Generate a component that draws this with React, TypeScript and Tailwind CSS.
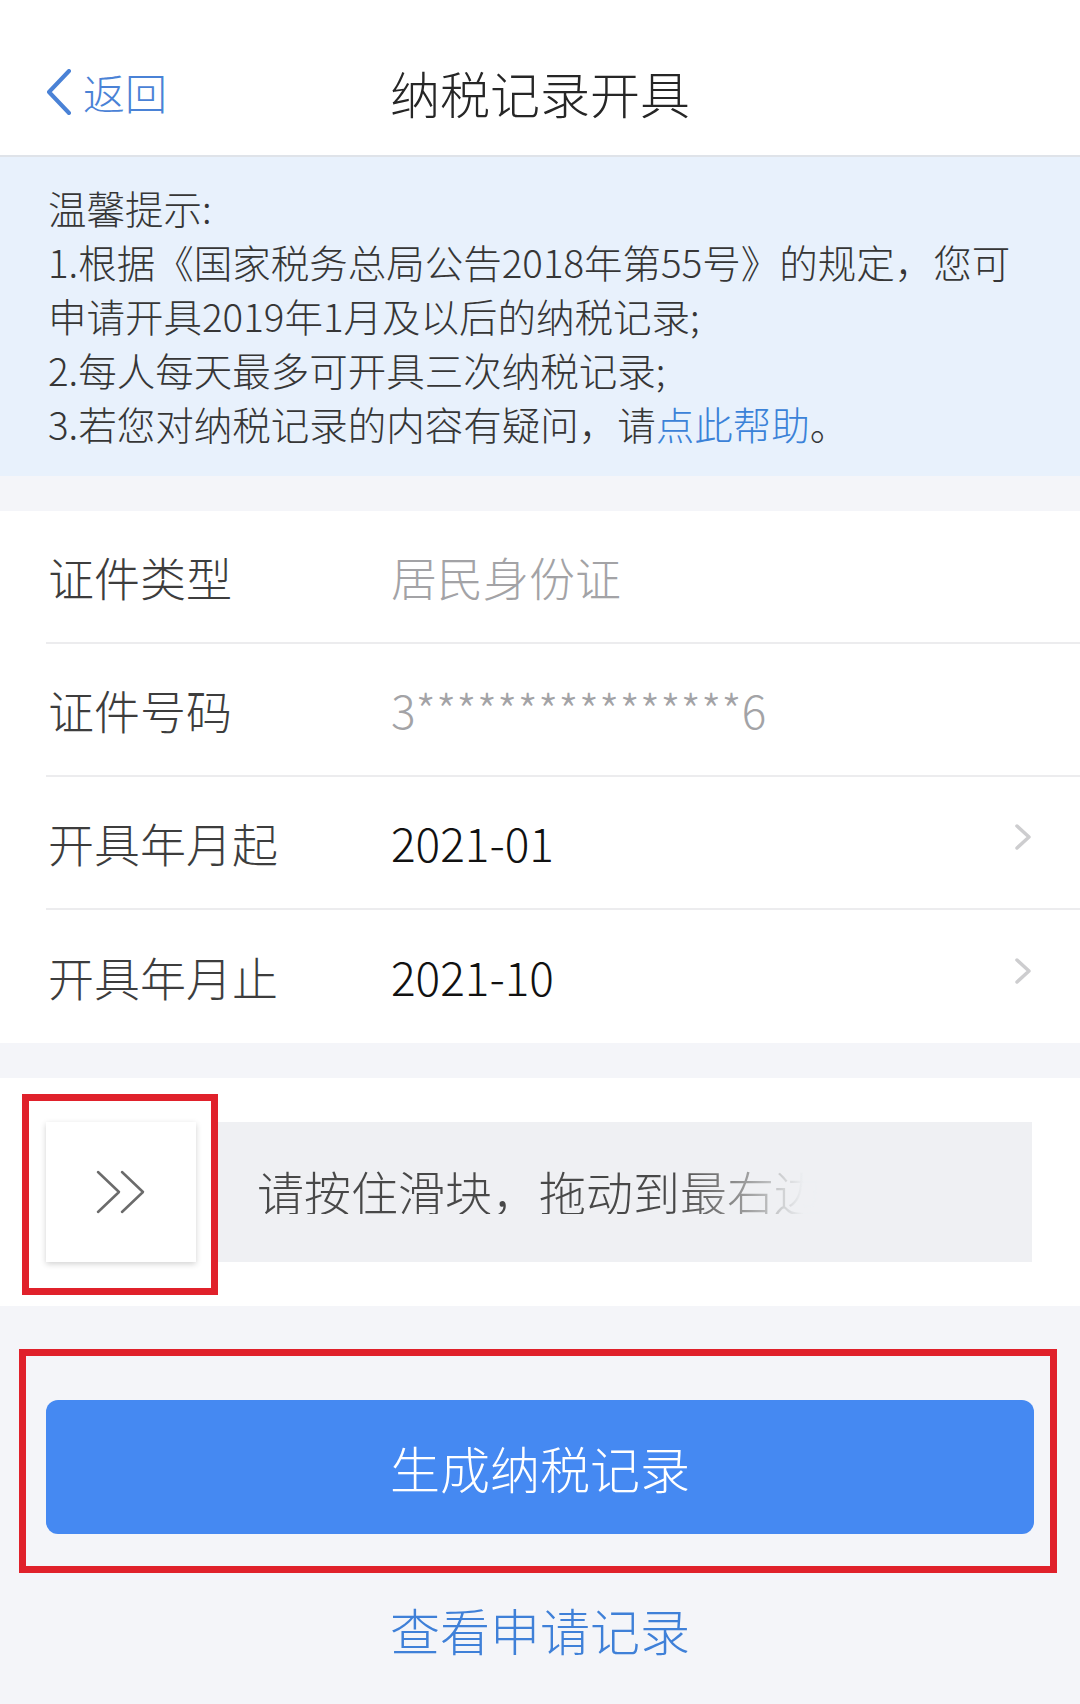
import React from 'react';

const rows = [
    { label: '证件类型', value: '居民身份证', muted: true, arrow: false },
    { label: '证件号码', value: '3****************6', muted: true, arrow: false },
    { label: '开具年月起', value: '2021-01', muted: false, arrow: true },
    { label: '开具年月止', value: '2021-10', muted: false, arrow: true },
];

const Chevron: React.FC = () => (
    <svg width="18" height="28" viewBox="0 0 18 28" fill="none">
        <polyline points="3,2 15,13 3,24" stroke="#cdcdcf" strokeWidth={3.5} strokeLinecap="round" strokeLinejoin="round" />
    </svg>
);

const App: React.FC = () => {
    return (
        <div className="relative w-[1080px] h-[1704px] bg-[#f4f5f9] font-light font-['Noto_Sans_CJK_SC','PingFang_SC',sans-serif] overflow-hidden">
            {/* nav bar */}
            <div className="h-[157px] bg-white border-b-2 border-[#dfe3e9] pt-[62px]">
                <div className="grid grid-cols-[1fr_auto_1fr] items-center h-[60px]">
                    <div className="flex items-center pl-[45px] gap-[10px] text-[#4a82d6]">
                        <svg width="28" height="46" viewBox="0 0 28 46" fill="none">
                            <polyline points="24,2 4,23 24,44" stroke="#4a82d6" strokeWidth={4} strokeLinecap="round" strokeLinejoin="round" />
                        </svg>
                        <span className="text-[42px] leading-none">返回</span>
                    </div>
                    <h1 className="text-[50px] leading-none text-[#262626]">纳税记录开具</h1>
                    <div />
                </div>
            </div>

            {/* notice */}
            <div className="bg-[#e8f1fc] px-[48px] pt-[23px] pb-[26px] text-[38.5px] leading-[54px] text-[#363636] whitespace-nowrap">
                <p>温馨提示:</p>
                <p>1.根据《国家税务总局公告2018年第55号》的规定，您可</p>
                <p>申请开具2019年1月及以后的纳税记录;</p>
                <p>2.每人每天最多可开具三次纳税记录;</p>
                <p>
                    3.若您对纳税记录的内容有疑问，请<span className="text-[#3b82d8]">点此帮助</span>。
                </p>
            </div>

            {/* form */}
            <div className="mt-[35px] bg-white">
                {rows.map((row, i) => (
                    <div
                        key={row.label}
                        className={`ml-[46px] h-[133px] flex items-center pl-[2px] pr-[48px] ${i < rows.length - 1 ? 'border-b-2 border-[#ececee]' : ''}`}
                    >
                        <span className="w-[343px] text-[46px] text-[#3d3d3d]">{row.label}</span>
                        <span className={`flex-1 text-[46px] ${row.muted ? 'text-[#a3a3a6]' : 'text-[#111111]'}`}>{row.value}</span>
                        {row.arrow && (
                            <div className="-mt-[10px]">
                                <Chevron />
                            </div>
                        )}
                    </div>
                ))}
            </div>

            {/* slider */}
            <div className="mt-[35px] bg-white h-[228px] px-[48px] pl-[46px] py-[44px]">
                <div className="flex h-[140px]">
                    <div className="w-[150px] h-[140px] bg-white shadow-[0_2px_6px_rgba(0,0,0,0.18)] flex items-center justify-center">
                        <svg width="52" height="44" viewBox="0 0 52 44" fill="none">
                            <polyline points="3,2 24,22 3,42" stroke="#6b6b6b" strokeWidth={2.5} strokeLinecap="round" strokeLinejoin="round" />
                            <polyline points="27,2 48,22 27,42" stroke="#6b6b6b" strokeWidth={2.5} strokeLinecap="round" strokeLinejoin="round" />
                        </svg>
                    </div>
                    <div className="ml-[22px] flex-1 bg-[#eff0f3] flex items-center pl-[39px] pb-[4px]">
                        <span className="inline-block text-[47px] leading-none bg-clip-text text-transparent bg-[linear-gradient(90deg,#484848_0%,#484848_74%,#8e8e8e_85%,#eef0f3_97%)]">
                            请按住滑块，拖动到最右边
                        </span>
                    </div>
                </div>
            </div>

            {/* actions */}
            <div className="px-[46px] pt-[94px]">
                <button className="w-full h-[134px] rounded-[12px] bg-[#4589f2] text-white text-[50px]">生成纳税记录</button>
                <div className="mt-[70px] text-center text-[50px] leading-none text-[#3f80d8]">查看申请记录</div>
            </div>

            {/* red annotation boxes */}
            <div className="absolute left-[22px] top-[1094px] w-[196px] h-[201px] border-[7px] border-[#e0212b]" />
            <div className="absolute left-[19px] top-[1349px] w-[1038px] h-[224px] border-[7px] border-[#e0212b]" />
        </div>
    );
};

export default App;
